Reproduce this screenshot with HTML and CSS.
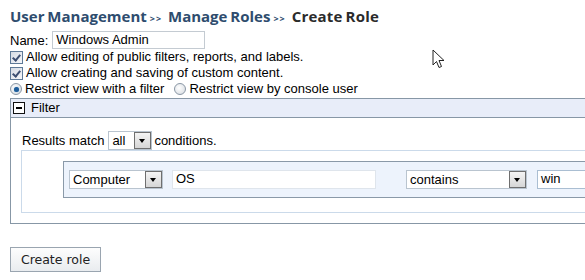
FILE: index.html
```html
<!DOCTYPE html>
<html lang="en">
<head>
    <meta charset="UTF-8">
    <title>Create Role</title>
    <link rel="stylesheet" href="styles.css">
</head>
<body>
    <h1 class="crumbs">
        <span class="crumb">User Management</span><span class="sep">&gt;&gt;</span>
        <span class="crumb">Manage Roles</span><span class="sep">&gt;&gt;</span>
        <span class="current">Create Role</span>
    </h1>

    <div class="name-row">
        <label>Name:</label>
        <div class="text-box name-box">Windows Admin</div>
    </div>

    <div class="opt-row"><span class="check on"></span>Allow editing of public filters, reports, and labels.</div>
    <div class="opt-row"><span class="check on"></span>Allow creating and saving of custom content.</div>
    <div class="opt-row">
        <span class="radio on"></span>Restrict view with a filter
        <span class="radio second"></span>Restrict view by console user
    </div>

    <div class="panel">
        <div class="panel-head">
            <span class="toggle"></span>Filter
        </div>
        <div class="panel-body">
            <div class="match-row">
                Results match
                <div class="fake-select sel-all"><span class="sel-text">all</span><span class="sel-btn"></span></div>
                <span class="after-sel">conditions.</span>
            </div>
            <div class="cond-box">
                <div class="cond-row">
                    <div class="fake-select sel-field"><span class="sel-text">Computer</span><span class="sel-btn"></span></div>
                    <div class="text-box cond-input">OS</div>
                    <div class="fake-select sel-op"><span class="sel-text">contains</span><span class="sel-btn"></span></div>
                    <div class="text-box cond-value">win</div>
                </div>
            </div>
        </div>
    </div>

    <div class="actions">
        <button class="btn">Create role</button>
    </div>

    <!-- mouse pointer caught in the screenshot -->
    <svg class="pointer" width="14" height="22" viewBox="0 0 14 22">
        <path d="M1 1 L1 16 L4.5 12.5 L7 18.5 L9.5 17.5 L7 11.5 L12 11.5 Z" fill="#fff" stroke="#222" stroke-width="1" stroke-linejoin="round"/>
    </svg>
</body>
</html>
```

FILE: styles.css
```css
* {
    box-sizing: border-box;
}

body {
    margin: 0;
    padding: 6px 0 0 10px;
    width: 585px;
    height: 280px;
    overflow: hidden;
    position: relative;
    background: #fff;
    font-family: 'Liberation Sans', Arial, sans-serif;
    font-size: 13px;
    color: #000;
}

/* breadcrumb title */
.crumbs {
    margin: 0;
    height: 22px;
    font-family: 'Open Sans', sans-serif;
    font-size: 15px;
    font-weight: 700;
    line-height: 20px;
    white-space: nowrap;
    word-spacing: -1px;
}

.crumb {
    color: #2e4c6e;
}

.sep {
    font-size: 9px;
    color: #2e4c6e;
    margin: 0 3px 0 3px;
    letter-spacing: 1px;
}

.current {
    color: #2b2b2b;
    letter-spacing: 0.2px;
}

/* name field */
.name-row {
    display: flex;
    align-items: center;
    gap: 4px;
    margin-top: 3px;
    height: 18px;
}

.text-box {
    flex-shrink: 0;
    height: 18px;
    border: 1px solid #c4cbd2;
    background: #fff;
    padding: 0 3px;
    line-height: 16px;
    font-size: 13px;
    white-space: nowrap;
    overflow: hidden;
}

.name-box {
    width: 153px;
}

/* options */
.opt-row {
    display: flex;
    align-items: center;
    height: 16px;
    line-height: 16px;
}

.opt-row:first-of-type {
    margin-top: 2px;
}

.check {
    width: 13px;
    height: 13px;
    border: 1px solid #5f7a98;
    background: linear-gradient(135deg, #d6dbe4, #f6f7fa);
    margin-right: 3px;
    position: relative;
}

.check.on::after {
    content: '';
    position: absolute;
    left: 3px;
    top: 1px;
    width: 3px;
    height: 6px;
    border: solid #3d4f72;
    border-width: 0 2px 2px 0;
    transform: rotate(40deg);
}

.radio {
    width: 12px;
    height: 12px;
    border-radius: 50%;
    border: 1px solid #8a97a5;
    background: radial-gradient(circle at 40% 40%, #fff, #d3d8de);
    margin-right: 3px;
    position: relative;
}

.radio.second {
    margin-left: 10px;
}

.radio.on::after {
    content: '';
    position: absolute;
    left: 2.5px;
    top: 2.5px;
    width: 5px;
    height: 5px;
    border-radius: 50%;
    background: #1f5d99;
    box-shadow: 0 0 1px #4a90d0;
}

/* filter panel */
.panel {
    width: 640px;
    margin-top: 1px;
    border: 1px solid #8797a6;
}

.panel-head {
    height: 19px;
    background: #e8edf9;
    border-bottom: 1px solid #8797a6;
    display: flex;
    align-items: center;
    padding-left: 2px;
    line-height: 18px;
}

.toggle {
    width: 12px;
    height: 12px;
    border: 1px solid #111;
    background: #fff;
    margin-right: 6px;
    position: relative;
}

.toggle::after {
    content: '';
    position: absolute;
    left: 2px;
    top: 4px;
    width: 6px;
    height: 2px;
    background: #000;
}

.panel-body {
    padding: 13px 0 10px 10px;
}

.match-row {
    display: flex;
    align-items: center;
    height: 19px;
    gap: 4px;
    padding-left: 1px;
}

.after-sel {
    margin-left: -2px;
}

.fake-select {
    flex-shrink: 0;
    display: flex;
    align-items: center;
    height: 19px;
    border: 1px solid #b9c4cf;
    background: #fff;
}

.sel-text {
    flex: 1;
    padding-left: 3px;
    line-height: 17px;
    white-space: nowrap;
}

.sel-btn {
    width: 17px;
    height: 17px;
    border: 1px solid #6f6f6f;
    background: linear-gradient(#f4f4f4, #d6d6d6);
    position: relative;
}

.sel-btn::after {
    content: '';
    position: absolute;
    left: 4px;
    top: 6px;
    border-left: 3.5px solid transparent;
    border-right: 3.5px solid transparent;
    border-top: 4px solid #000;
}

.sel-all {
    width: 44px;
}

.cond-box {
    border: 1px solid #cbdaea;
    margin-top: 0;
    padding: 10px 0 14px 41px;
}

.cond-row {
    display: flex;
    align-items: center;
    height: 37px;
    padding-left: 5px;
    background: #edf3fc;
    border: 1px solid #8a99a8;
}

.sel-field {
    width: 94px;
}

.cond-input {
    width: 204px;
    height: 19px;
    margin-left: 9px;
    border-color: #dfe5ec;
}

.sel-op {
    width: 121px;
    margin-left: 30px;
}

.cond-value {
    width: 120px;
    height: 19px;
    margin-left: 10px;
    border-color: #aabed2;
}

/* submit */
.actions {
    margin-top: 23px;
}

.btn {
    height: 25px;
    width: 91px;
    padding: 0;
    font-family: 'DejaVu Sans', Verdana, sans-serif;
    font-size: 12.5px;
    color: #222;
    background: linear-gradient(#fdfdfd, #e9ecef);
    border: 1px solid #9aa5b0;
    border-radius: 0;
}

.pointer {
    position: absolute;
    left: 432px;
    top: 49px;
}
```
